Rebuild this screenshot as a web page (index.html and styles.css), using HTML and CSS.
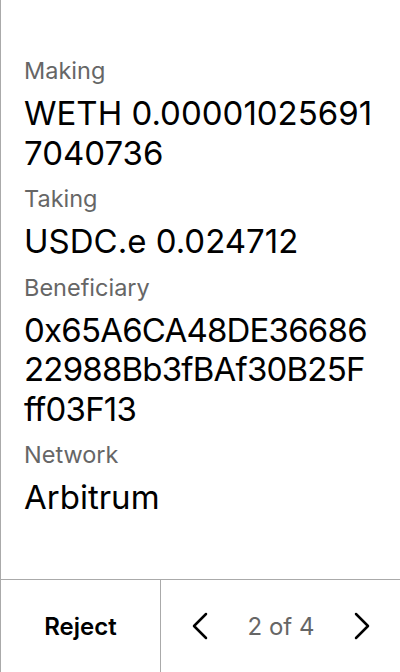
FILE: index.html
```html
<!DOCTYPE html>
<html>
<head>
<meta charset="utf-8">
<link rel="stylesheet" href="styles.css">
</head>
<body>
<div class="screen">
  <div class="details">
    <div class="field">
      <div class="label">Making</div>
      <div class="value">WETH 0.000010256917040736</div>
    </div>
    <div class="field">
      <div class="label">Taking</div>
      <div class="value">USDC.e 0.024712</div>
    </div>
    <div class="field">
      <div class="label">Beneficiary</div>
      <div class="value hex">0x65A6CA48DE3668622988Bb3fBAf30B25Fff03F13</div>
    </div>
    <div class="field">
      <div class="label">Network</div>
      <div class="value">Arbitrum</div>
    </div>
  </div>
  <div class="footer">
    <div class="reject">Reject</div>
    <div class="pager">
      <svg class="chev" width="16" height="28" viewBox="0 0 16 28"><path d="M14 2 L2 14 L14 26" fill="none" stroke="#000" stroke-width="2.5" stroke-linecap="round" stroke-linejoin="round"/></svg>
      <span class="count">2 of 4</span>
      <svg class="chev" width="16" height="28" viewBox="0 0 16 28"><path d="M2 2 L14 14 L2 26" fill="none" stroke="#000" stroke-width="2.5" stroke-linecap="round" stroke-linejoin="round"/></svg>
    </div>
  </div>
</div>
</body>
</html>
```
FILE: styles.css
```css
html, body {
  margin: 0;
  padding: 0;
  background: #fff;
}
body {
  font-family: Inter, "Noto Sans", sans-serif;
  color: #000;
}
.screen {
  width: 400px;
  height: 672px;
  box-sizing: border-box;
  border-left: 1px solid #aaa;
  display: flex;
  flex-direction: column;
}
.details {
  flex: 1;
  padding: 55px 26px 0 23px;
  display: flex;
  flex-direction: column;
  gap: 10px;
}
.label {
  font-size: 23.5px;
  line-height: 32px;
  color: #666;
}
.value {
  font-size: 33px;
  line-height: 39.5px;
  margin-top: 7px;
  word-break: break-all;
}
.value.hex {
  letter-spacing: -0.8px;
}
.footer {
  height: 92px;
  border-top: 1px solid #aaa;
  display: flex;
}
.reject {
  width: 159px;
  border-right: 1px solid #aaa;
  display: flex;
  align-items: center;
  justify-content: center;
  font-size: 24px;
  font-weight: 600;
}
.pager {
  flex: 1;
  display: flex;
  align-items: center;
  justify-content: space-between;
  padding: 0 30px 0 31px;
}
.count {
  font-size: 24px;
  color: #666;
}
```
